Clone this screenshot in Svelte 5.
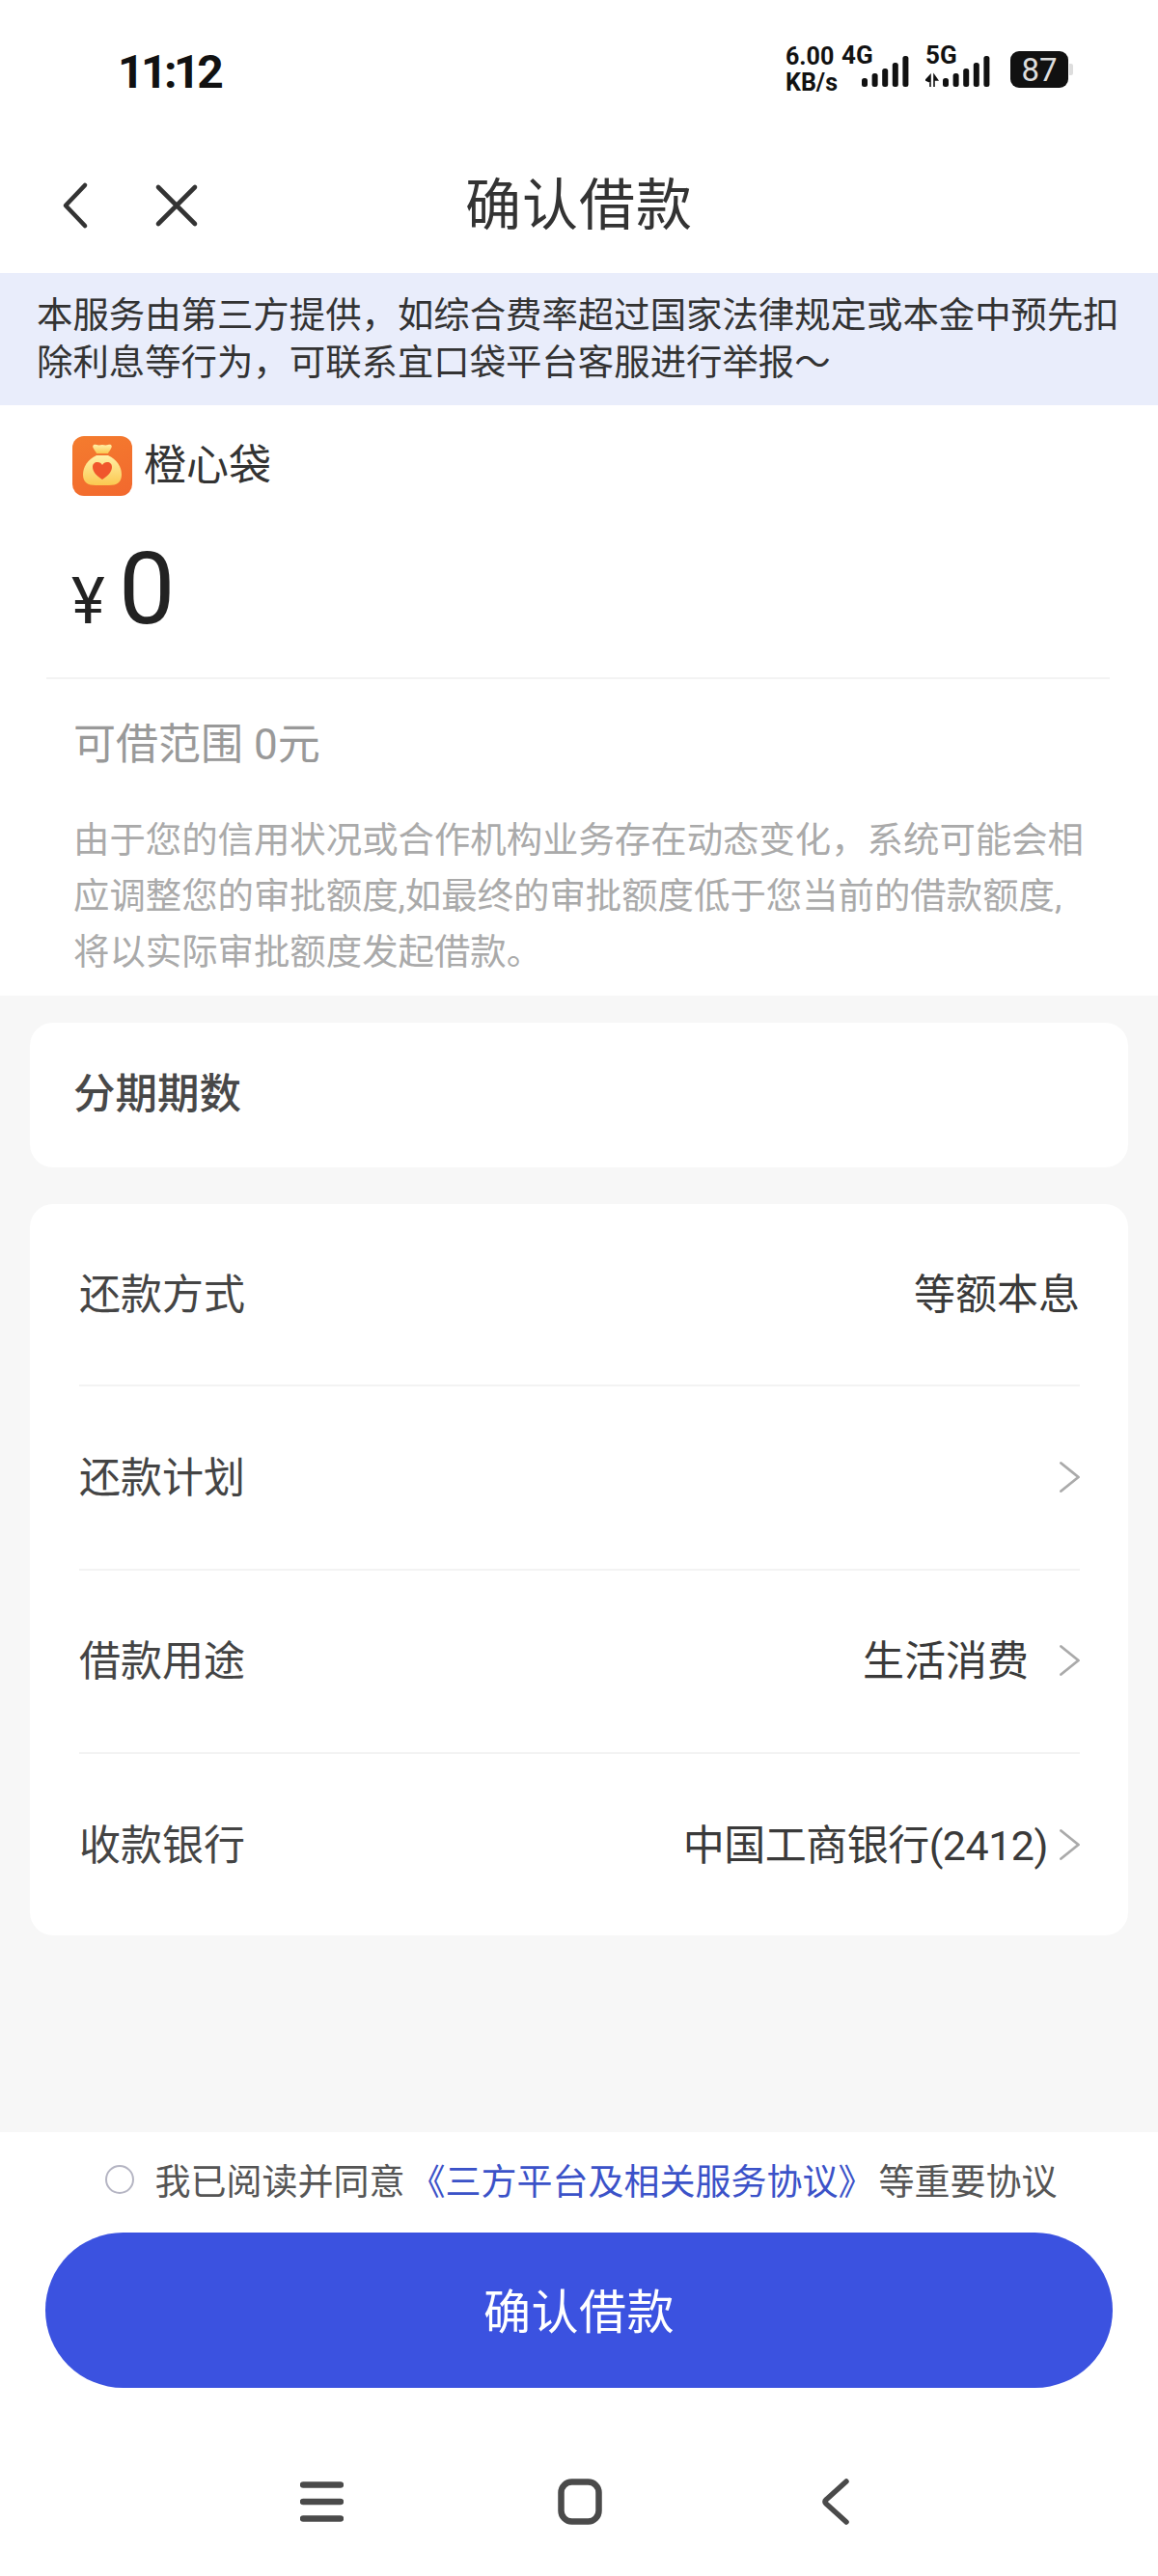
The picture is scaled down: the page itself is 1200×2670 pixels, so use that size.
<script>
  const rows = [
    { label: "还款方式", value: "等额本息", arrow: false },
    { label: "还款计划", value: "", arrow: true },
    { label: "借款用途", value: "生活消费", arrow: true },
    { label: "收款银行", value: "中国工商银行(2412)", arrow: true }
  ];
  const bars = [9, 14, 19, 25, 32];
</script>

<div class="page">
  <div class="status">
    <div class="time">11:12</div>
    <div class="status-right">
      <div class="speed"><span>6.00</span><span>KB/s</span></div>
      <div class="net net-4g">
        <span class="net-label">4G</span>
        <svg width="52" height="34" viewBox="0 0 52 34">
          {#each bars as h, i}
            <rect x={1 + i * 10.6} y={33 - h} width="6" height={h} rx="2.5" fill="#111" />
          {/each}
        </svg>
      </div>
      <div class="net net-5g">
        <span class="net-label">5G</span>
        <svg width="70" height="34" viewBox="0 0 70 34">
          <path d="M5 21v12M0.5 26 5 21v7zM9 33V21M9 21l3.5 5H9z" stroke="#111" stroke-width="1.6" fill="#111" />
          {#each bars as h, i}
            <rect x={18 + i * 10.6} y={33 - h} width="6" height={h} rx="2.5" fill="#111" />
          {/each}
        </svg>
      </div>
      <div class="battery"><span>87</span></div>
      <div class="batt-tip"></div>
    </div>
  </div>

  <div class="nav">
    <div class="nav-icons">
      <svg width="32" height="50" viewBox="0 0 32 50"><path d="M26 4 6 25l20 21" fill="none" stroke="#333" stroke-width="4.6" stroke-linecap="round" stroke-linejoin="round" /></svg>
      <svg width="46" height="46" viewBox="0 0 46 46"><path d="M4 4l38 38M42 4 4 42" fill="none" stroke="#333" stroke-width="4.6" stroke-linecap="round" /></svg>
    </div>
    <div class="title">确认借款</div>
  </div>

  <div class="notice">本服务由第三方提供，如综合费率超过国家法律规定或本金中预先扣除利息等行为，可联系宜口袋平台客服进行举报～</div>

  <section class="loan">
    <div class="brand">
      <div class="logo">
        <svg width="62" height="62" viewBox="0 0 62 62">
          <defs>
            <linearGradient id="bag" x1="0" y1="0" x2="0" y2="1">
              <stop offset="0" stop-color="#fff0a8" />
              <stop offset="1" stop-color="#fbc850" />
            </linearGradient>
          </defs>
          <path d="M22 13c-2-3 0-5 3-4 3 1 4 0 6 0s3 1 6 0c3-1 5 1 3 4-1 2-3 4-3 5H25c0-1-2-3-3-5z" fill="url(#bag)" />
          <path d="M25 20h12c9 4 14 12 14 20 0 8-5 11-13 11H24c-8 0-13-3-13-11 0-8 5-16 14-20z" fill="url(#bag)" />
          <path d="M31 45c-6-4-10-8-10-13 0-3 2-5 5-5 2 0 4 1 5 3 1-2 3-3 5-3 3 0 5 2 5 5 0 5-4 9-10 13z" fill="#f0562c" />
        </svg>
      </div>
      <span>橙心袋</span>
    </div>
    <div class="amount"><span class="yen">¥</span><span class="num">0</span></div>
    <div class="range-wrap"><div class="range">可借范围 0元</div></div>
    <p class="tip">由于您的信用状况或合作机构业务存在动态变化，系统可能会相应调整您的审批额度,如最终的审批额度低于您当前的借款额度,将以实际审批额度发起借款。</p>
  </section>

  <main class="body">
    <div class="card terms">分期期数</div>
    <div class="card list">
      {#each rows as row}
        <div class="row">
          <span class="label">{row.label}</span>
          <span class="right">
            {#if row.value}<span class="value">{row.value}</span>{/if}
            {#if row.arrow}
              <svg class="chev" width="21" height="32" viewBox="0 0 21 32"><path d="M1.5 1.5 19.5 16 1.5 30.5" fill="none" stroke="#aaa" stroke-width="2.8" stroke-linecap="round" stroke-linejoin="round" /></svg>
            {/if}
          </span>
        </div>
      {/each}
    </div>
  </main>

  <footer class="foot">
    <div class="agree">
      <span class="radio"></span>
      <span class="agree-text">我已阅读并同意<a>《三方平台及相关服务协议》</a>等重要协议</span>
    </div>
    <div class="btn">确认借款</div>
    <div class="sysnav">
      <svg width="45" height="42" viewBox="0 0 45 42"><path d="M3 3.5h39M3 21h39M3 38.5h39" stroke="#4a4a4a" stroke-width="6.5" stroke-linecap="round" /></svg>
      <svg width="46" height="48" viewBox="0 0 46 48"><rect x="3.5" y="3.5" width="39" height="41" rx="11" fill="none" stroke="#4a4a4a" stroke-width="6.5" /></svg>
      <svg width="29" height="48" viewBox="0 0 29 48"><path d="M26 3 5 22c-1.500 1.200-1.500 2.800 0 4l21 19" fill="none" stroke="#4a4a4a" stroke-width="5.500" stroke-linecap="round" stroke-linejoin="round" /></svg>
    </div>
  </footer>
</div>

<style>
  :global(body) {
    margin: 0;
    background: #fff;
  }

  .page {
    width: 1200px;
    height: 2670px;
    display: flex;
    flex-direction: column;
    overflow: hidden;
    background: #f7f7f7;
    color: #333;
    font-family: Roboto, "Noto Sans CJK SC", sans-serif;
  }

  /* status bar */
  .status {
    height: 142px;
    flex: none;
    box-sizing: border-box;
    padding: 0 88px 0 122px;
    display: flex;
    align-items: center;
    justify-content: space-between;
    background: #fff;
  }

  .time {
    font-size: 48px;
    font-weight: 700;
    color: #111;
    letter-spacing: -3.5px;
    padding-top: 6px;
  }

  .status-right {
    display: flex;
    align-items: flex-end;
    height: 56px;
    color: #111;
    font-weight: 700;
  }

  .speed {
    display: flex;
    flex-direction: column;
    font-size: 25px;
    line-height: 27px;
    width: 58px;
  }

  .net {
    position: relative;
    height: 56px;
    display: flex;
    align-items: flex-end;
  }

  .net svg {
    margin-bottom: 8px;
  }

  .net-4g {
    width: 87px;
    justify-content: flex-end;
  }

  .net-4g svg {
    margin-right: 15px;
  }

  .net-5g {
    width: 72px;
  }

  .net-label {
    position: absolute;
    left: 0;
    top: 0;
    font-size: 26px;
    line-height: 28px;
  }

  .battery {
    width: 60px;
    height: 38px;
    margin: 0 0 8px 16px;
    background: #111;
    border-radius: 9px;
    color: #ddd;
    font-size: 33px;
    font-weight: 400;
    display: flex;
    align-items: center;
    justify-content: center;
  }

  .batt-tip {
    width: 4px;
    height: 12px;
    margin: 0 0 21px 1px;
    background: #ddd;
    border-radius: 0 2px 2px 0;
  }

  /* nav bar */
  .nav {
    height: 141px;
    flex: none;
    position: relative;
    display: flex;
    align-items: center;
    justify-content: center;
    background: #fff;
  }

  .nav-icons {
    position: absolute;
    left: 62px;
    top: 46px;
    display: flex;
    align-items: center;
    gap: 66px;
  }

  .title {
    font-size: 58px;
    color: #333;
    line-height: 1;
    letter-spacing: 1px;
  }

  .notice {
    flex: none;
    height: 137px;
    box-sizing: border-box;
    padding: 20px 36px 0 38px;
    background: #e9edfb;
    font-size: 37.4px;
    line-height: 49px;
    color: #333;
  }

  /* loan summary */
  .loan {
    flex: none;
    height: 612px;
    box-sizing: border-box;
    padding-top: 32px;
    background: #fff;
  }

  .brand {
    display: flex;
    align-items: center;
    gap: 12px;
    padding-left: 75px;
    font-size: 44px;
    line-height: 62px;
    color: #333;
  }

  .logo {
    width: 62px;
    height: 62px;
    border-radius: 12px;
    background: linear-gradient(160deg, #f47c2e, #f2682e);
  }

  .logo svg {
    display: block;
  }

  .amount {
    display: flex;
    align-items: baseline;
    padding-left: 74px;
    margin-top: 42px;
    height: 110px;
    line-height: 110px;
    color: #222;
  }

  .yen {
    font-size: 66px;
    width: 49px;
  }

  .num {
    font-size: 104px;
  }

  .range-wrap {
    margin: 36px 50px 0 48px;
    padding: 40px 0 0 28px;
    border-top: 2px solid #f3f3f3;
  }

  .range {
    font-size: 44px;
    line-height: 56px;
    color: #999;
  }

  .tip {
    margin: 42px 70px 0 76px;
    font-size: 37.4px;
    line-height: 58px;
    color: #aaa;
  }

  /* cards */
  .body {
    flex: 1;
    padding: 28px 31px 0;
    display: flex;
    flex-direction: column;
    gap: 38px;
  }

  .card {
    background: #fff;
    border-radius: 24px;
  }

  .terms {
    height: 150px;
    box-sizing: border-box;
    padding: 0 0 10px 45px;
    display: flex;
    align-items: center;
    font-size: 43.5px;
    font-weight: 500;
    color: #484848;
  }

  .list {
    padding: 0 50px 0 51px;
  }

  .row {
    height: 190.5px;
    box-sizing: border-box;
    padding-bottom: 7px;
    display: flex;
    align-items: center;
    justify-content: space-between;
    border-bottom: 2px solid #f3f3f3;
    font-size: 43px;
    color: #444;
  }

  .row:first-child {
    height: 189px;
  }

  .row:last-child {
    height: 188px;
    border-bottom: none;
  }

  .row:last-child .value {
    letter-spacing: -0.5px;
  }

  .right {
    display: flex;
    align-items: center;
  }

  .value {
    color: #3a3a3a;
  }

  .chev {
    margin: 6px 0 0 12px;
  }

  .row:nth-child(3) .chev {
    margin-left: 32px;
  }

  /* footer */
  .foot {
    flex: none;
    height: 460px;
    background: #fff;
    display: flex;
    flex-direction: column;
    align-items: center;
  }

  .agree {
    height: 104px;
    box-sizing: border-box;
    padding: 0 0 6px 4px;
    display: flex;
    align-items: center;
    gap: 22px;
    font-size: 37px;
    color: #555;
  }

  .radio {
    width: 26px;
    height: 26px;
    border: 2.5px solid #b5b5c3;
    border-radius: 50%;
  }

  .agree-text a {
    color: #3b52c8;
    margin: 0 5px;
  }

  .btn {
    width: 1106px;
    height: 161px;
    flex: none;
    box-sizing: border-box;
    padding-bottom: 5px;
    border-radius: 81px;
    background: #3b52e0;
    color: #fff;
    font-size: 49px;
    letter-spacing: 0.5px;
    display: flex;
    align-items: center;
    justify-content: center;
  }

  .sysnav {
    width: 100%;
    box-sizing: border-box;
    padding: 94px 0 0 311px;
    display: flex;
    align-items: center;
    gap: 222px;
  }

  .sysnav svg:last-child {
    margin-left: 5px;
  }
</style>
